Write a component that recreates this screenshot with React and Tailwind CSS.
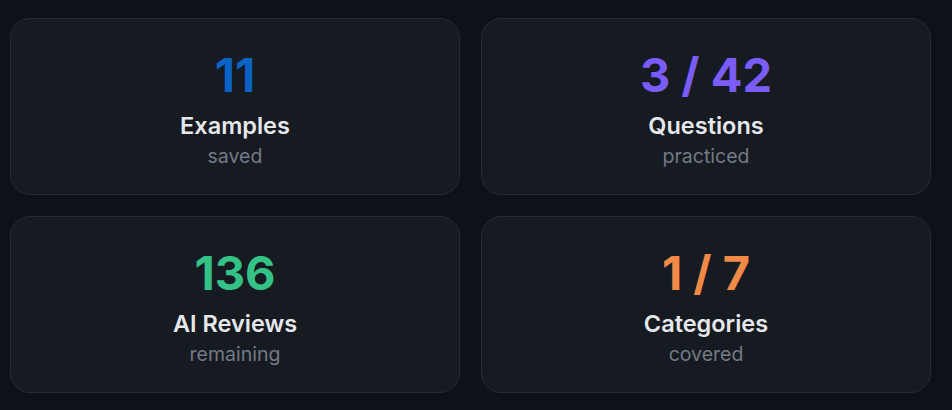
import React from "react";

const stats = [
  { value: "11", label: "Examples", sub: "saved", color: "text-[#0b63c6]" },
  { value: "3 / 42", label: "Questions", sub: "practiced", color: "text-[#7b5cf6]" },
  { value: "136", label: "AI Reviews", sub: "remaining", color: "text-[#34c286]" },
  { value: "1 / 7", label: "Categories", sub: "covered", color: "text-[#f08a46]" },
];

function StatCard({ value, label, sub, color }) {
  return (
    <div className="flex flex-col items-center justify-center h-[177px] pt-[6px] rounded-[20px] border border-[#262c35] bg-[#161b22]">
      <div className={`text-[47px] font-bold leading-none ${color}`}>{value}</div>
      <div className="mt-[13px] text-[23.5px] font-semibold leading-tight text-[#e6e8eb]">{label}</div>
      <div className="mt-[3px] text-[19.5px] leading-tight text-[#737a84]">{sub}</div>
    </div>
  );
}

export default function App() {
  return (
    <div
      className="w-[952px] h-[410px] bg-[#0e1117] pt-[18px] pl-[10px]"
      style={{ fontFamily: "Inter, 'Noto Sans', sans-serif" }}
    >
      <div className="grid grid-cols-2 gap-[21px] w-[921px]">
        {stats.map((s) => (
          <StatCard key={s.label} {...s} />
        ))}
      </div>
    </div>
  );
}
